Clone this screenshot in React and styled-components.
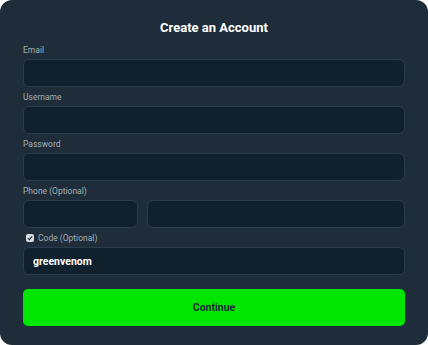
import React from "react";
import styled, { createGlobalStyle } from "styled-components";

const Global = createGlobalStyle`
  html, body { margin: 0; padding: 0; background: #ffffff; }
  body { font-family: Roboto, "Liberation Sans", sans-serif; }
  * { box-sizing: border-box; }
`;

const Panel = styled.form`
  width: 428px;
  height: 345px;
  background: #1e2d39;
  border-radius: 12px;
  padding: 20px 23px 0;
  display: flex;
  flex-direction: column;
`;

const Title = styled.h1`
  margin: 0 0 8px;
  font-size: 13px;
  line-height: 16px;
  font-weight: 700;
  color: #ffffff;
  text-align: center;
`;

const Field = styled.div`
  display: flex;
  flex-direction: column;
  gap: 3px;
  margin-bottom: 4px;
`;

const Label = styled.label`
  font-size: 8.5px;
  line-height: 12px;
  color: #a3adb6;
  display: flex;
  align-items: center;
  gap: 4px;
`;

const Input = styled.input`
  height: 28px;
  width: ${(p) => p.$w || "100%"};
  flex: ${(p) => (p.$grow ? 1 : "none")};
  background: #10202d;
  border: 1px solid #2a3b49;
  border-radius: 6px;
  padding: 0 9px;
  font-family: inherit;
  font-size: 10.5px;
  font-weight: 700;
  color: #ffffff;
  outline: none;
`;

const Row = styled.div`
  display: flex;
  gap: 9px;
`;

const Check = styled.span`
  width: 8px;
  height: 8px;
  margin-left: 3px;
  border-radius: 2px;
  background: #d9dee3;
  display: inline-flex;
  align-items: center;
  justify-content: center;
`;

const Button = styled.button`
  margin-top: 10px;
  height: 37px;
  width: 100%;
  border: none;
  border-radius: 5px;
  background: #00e600;
  color: #1a2935;
  font-family: inherit;
  font-size: 10.5px;
  font-weight: 700;
  cursor: pointer;
`;

export default function App() {
  return (
    <>
      <Global />
      <Panel onSubmit={(e) => e.preventDefault()}>
        <Title>Create an Account</Title>
        <Field>
          <Label>Email</Label>
          <Input />
        </Field>
        <Field>
          <Label>Username</Label>
          <Input />
        </Field>
        <Field>
          <Label>Password</Label>
          <Input type="password" />
        </Field>
        <Field>
          <Label>Phone (Optional)</Label>
          <Row>
            <Input $w="115px" />
            <Input $grow />
          </Row>
        </Field>
        <Field>
          <Label>
            <Check>
              <svg width="6" height="6" viewBox="0 0 10 10">
                <path d="M1.5 5.2 L4 7.6 L8.6 2.4" fill="none" stroke="#1e2d39" strokeWidth="2" />
              </svg>
            </Check>
            Code (Optional)
          </Label>
          <Input defaultValue="greenvenom" />
        </Field>
        <Button type="submit">Continue</Button>
      </Panel>
    </>
  );
}
